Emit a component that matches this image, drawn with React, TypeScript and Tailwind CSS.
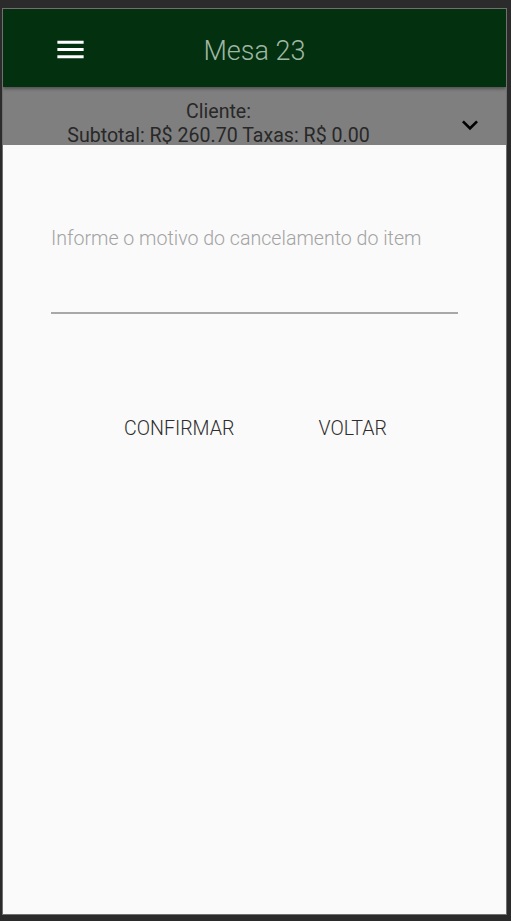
import React from 'react';

const MenuIcon = () => (
  <svg viewBox="0 0 24 24" className="w-[35px] h-[35px]" fill="#ffffff">
    <path d="M3 18h18v-2H3v2zm0-5h18v-2H3v2zm0-7v2h18V6H3z" />
  </svg>
);

const ChevronDown = () => (
  <svg viewBox="0 0 24 24" className="w-[32px] h-[32px]" fill="#000000">
    <path d="M16.59 8.59L12 13.17 7.41 8.59 6 10l6 6 6-6z" />
  </svg>
);

export default function App() {
  return (
    <div
      className="w-[511px] h-[921px] bg-[#2b2b2b] pt-[8px] pl-[2px] pr-[4px] pb-[6px]"
      style={{ fontFamily: 'Roboto, "Liberation Sans", sans-serif' }}
    >
      <div className="h-full border border-[#707070] flex flex-col overflow-hidden">
        {/* top bar */}
        <header className="relative h-[78px] shrink-0 bg-[#03300f] flex items-center shadow-[0_2px_3px_rgba(0,0,0,0.35)] z-10">
          <button className="absolute left-[50px] top-[23px]">
            <MenuIcon />
          </button>
          <h1 className="w-full text-center pt-[6px] text-[27px] font-light text-[#9fb7a3] leading-none">
            Mesa 23
          </h1>
        </header>

        {/* order summary, dimmed behind sheet */}
        <div className="relative h-[58px] shrink-0 bg-[#7f7f7f] flex overflow-hidden">
          <div className="flex-1 flex flex-col items-center pt-[13px] pr-[72px] text-[19.6px] leading-[24px] text-[#282828]">
            <span>Cliente:</span>
            <span>Subtotal: R$ 260.70 Taxas: R$ 0.00</span>
          </div>
          <div className="absolute right-[20px] top-[22px]">
            <ChevronDown />
          </div>
        </div>

        {/* cancel sheet */}
        <div className="flex-1 bg-[#fafafa] px-[48px] pt-[81px]">
          <input
            placeholder="Informe o motivo do cancelamento do item"
            className="w-[407px] h-[88px] pb-[61px] bg-transparent border-b-[2px] border-[#a8a8a8] text-[19.6px] font-light text-[#333] placeholder:text-[#a3a3a3] outline-none"
          />
          <div className="flex justify-center gap-[84px] mt-[100px] pl-[2px] text-[19.6px] font-light text-[#2e2e2e]">
            <button>CONFIRMAR</button>
            <button>VOLTAR</button>
          </div>
        </div>
      </div>
    </div>
  );
}
